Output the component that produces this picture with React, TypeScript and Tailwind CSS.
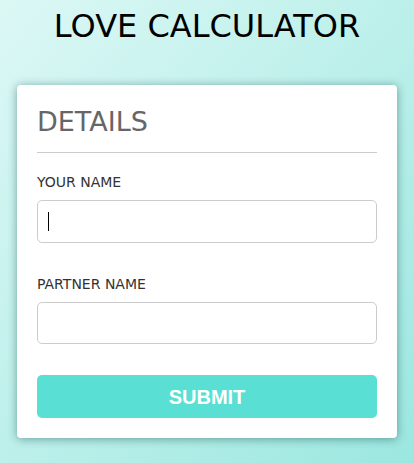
const App = () => {
  return (
    <div className="min-h-[463px] w-full bg-gradient-to-br from-[#dcf8f5] to-[#9be7e0] pt-2 pb-[25px] font-['DejaVu_Sans',sans-serif]">
      <h1 className="text-center text-[32px] leading-[37px] text-black">
        LOVE CALCULATOR
      </h1>

      <div className="mx-[17px] mt-10 rounded bg-white px-5 pt-[22px] pb-5 shadow-[0_1px_10px_rgba(0,60,60,0.45)]">
        <h2 className="text-[27px] leading-[30px] text-[#666]">DETAILS</h2>
        <div className="mt-[15px] h-px bg-[#ccc]" />

        <form onSubmit={(e) => e.preventDefault()} className="flex flex-col">
          <label className="mt-[21px] text-[14px] leading-[17px] text-[#333]">
            YOUR NAME
          </label>
          <div className="relative mt-[9px]">
            <input
              type="text"
              className="h-[43px] w-full rounded-[5px] border border-[#ccc] px-[10px] text-[16px] text-black caret-transparent outline-none"
            />
            {/* focused caret as in the screenshot */}
            <span className="pointer-events-none absolute top-[12px] left-[11px] h-[19px] w-px bg-black" />
          </div>

          <label className="mt-[33px] text-[14px] leading-[17px] text-[#333]">
            PARTNER NAME
          </label>
          <input
            type="text"
            className="mt-[9px] h-[42px] w-full rounded-[5px] border border-[#ccc] px-[10px] text-[16px] text-black outline-none"
          />

          <button
            type="submit"
            className="mt-[31px] h-[43px] w-full rounded-[5px] bg-[#5adfd4] font-['Liberation_Sans',sans-serif] text-[20px] font-bold text-white"
          >
            SUBMIT
          </button>
        </form>
      </div>
    </div>
  );
};

export default App;
